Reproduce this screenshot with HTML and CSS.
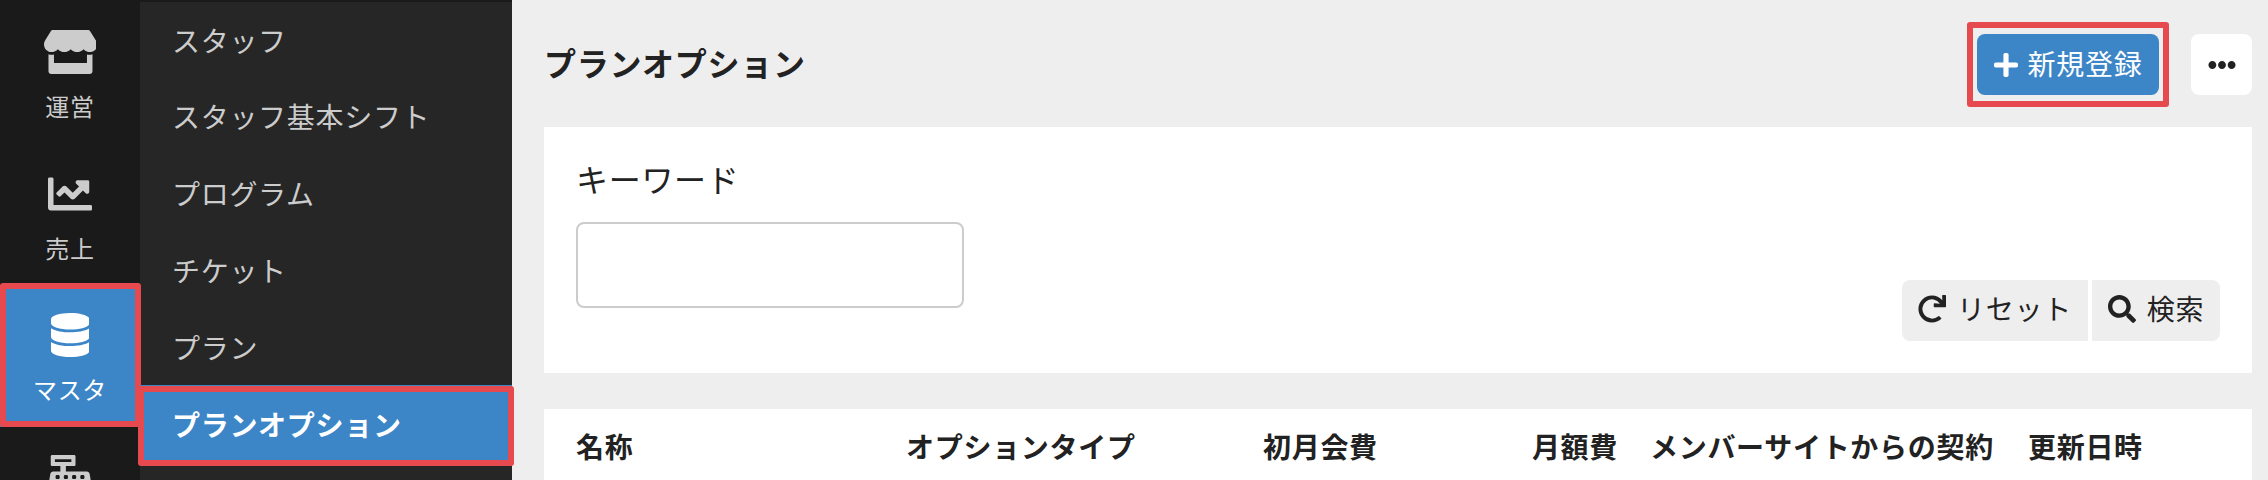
FILE: index.html
```html
<!DOCTYPE html>
<html lang="ja">

<head>
    <meta charset="UTF-8">
    <meta name="viewport" content="width=device-width, initial-scale=1.0">
    <title>プランオプション</title>
    <link rel="stylesheet" href="styles.css">
</head>

<body>

    <div class="rail">
        <a class="rail-item">
            <svg class="rail-icon" viewBox="0 0 616 512"><path d="M602 118.6L537.1 15C531.3 5.7 521 0 510 0H106C95 0 84.7 5.7 78.9 15L14 118.6c-33.9 54.1-3.9 129.3 59.4 137.9 4.6.6 9.2.9 13.7.9 29.9 0 56.4-13.1 74.6-33.4 18.2 20.3 44.8 33.4 74.6 33.4 29.9 0 56.4-13.1 74.6-33.4 18.2 20.3 44.8 33.4 74.6 33.4 30 0 56.4-13.1 74.6-33.4 18.3 20.3 44.8 33.4 74.6 33.4 4.6 0 9.1-.3 13.7-.9 63.5-8.5 93.6-83.7 59.6-137.9zM529.5 288c-10 0-19.9-1.5-29.5-3.8V384H116v-99.8c-9.6 2.2-19.5 3.8-29.5 3.8-6 0-12.1-.4-18-1.2-5.6-.8-11.1-2.1-16.4-3.6V480c0 17.7 14.3 32 32 32h448c17.7 0 32-14.3 32-32V283.2c-5.4 1.6-10.8 2.9-16.4 3.6-6.1.8-12.1 1.2-18.2 1.2z"/></svg>
            <span class="rail-label">運営</span>
        </a>
        <a class="rail-item">
            <svg class="rail-icon" viewBox="0 0 512 512"><path d="M496 384H64V80c0-8.84-7.16-16-16-16H16C7.16 64 0 71.16 0 80v336c0 17.67 14.33 32 32 32h464c8.84 0 16-7.16 16-16v-32c0-8.84-7.16-16-16-16zM464 96H345.94c-21.38 0-32.09 25.85-16.97 40.97l32.4 32.4L288 242.75l-73.37-73.37c-12.5-12.5-32.76-12.5-45.25 0l-68.69 68.69c-6.25 6.25-6.25 16.38 0 22.63l22.62 22.62c6.25 6.25 16.38 6.25 22.63 0L192 237.25l73.37 73.37c12.5 12.5 32.76 12.5 45.25 0l96-96 32.4 32.4c15.12 15.12 40.97 4.41 40.97-16.97V112c.01-8.84-7.15-16-15.99-16z"/></svg>
            <span class="rail-label">売上</span>
        </a>
        <a class="rail-item rail-active">
            <svg class="rail-icon" viewBox="0 0 448 512"><path d="M448 73.143v45.714C448 159.143 347.667 192 224 192S0 159.143 0 118.857V73.143C0 32.857 100.333 0 224 0s224 32.857 224 73.143zM448 176v102.857C448 319.143 347.667 352 224 352S0 319.143 0 278.857V176c48.125 33.143 136.208 48.572 224 48.572S399.874 209.143 448 176zm0 160v102.857C448 479.143 347.667 512 224 512S0 479.143 0 438.857V336c48.125 33.143 136.208 48.572 224 48.572S399.874 369.143 448 336z"/></svg>
            <span class="rail-label">マスタ</span>
        </a>
        <a class="rail-item rail-last">
            <svg class="rail-icon" viewBox="0 0 512 512"><path d="M511.1 378.8l-26.7-160c-2.6-15.4-15.9-26.7-31.6-26.7H208v-64h96c8.8 0 16-7.2 16-16V16c0-8.8-7.2-16-16-16H48c-8.8 0-16 7.2-16 16v96c0 8.8 7.2 16 16 16h96v64H59.1c-15.6 0-29 11.3-31.6 26.7L.8 378.7c-.5 2.6-.8 5.3-.8 7.9V480c0 17.7 14.3 32 32 32h448c17.7 0 32-14.3 32-32v-93.3c0-2.6-.2-5.3-.9-7.9zM280 248c0-8.8 7.2-16 16-16h16c8.8 0 16 7.2 16 16v16c0 8.8-7.2 16-16 16h-16c-8.8 0-16-7.2-16-16v-16zm-32 64h16c8.8 0 16 7.2 16 16v16c0 8.8-7.2 16-16 16h-16c-8.8 0-16-7.2-16-16v-16c0-8.8 7.2-16 16-16zm-32-80c8.8 0 16 7.2 16 16v16c0 8.8-7.2 16-16 16h-16c-8.8 0-16-7.2-16-16v-16c0-8.8 7.2-16 16-16h16zM80 80V48h192v32H80zm40 200h-16c-8.8 0-16-7.2-16-16v-16c0-8.8 7.2-16 16-16h16c8.8 0 16 7.2 16 16v16c0 8.8-7.2 16-16 16zm16 64v-16c0-8.8 7.2-16 16-16h16c8.8 0 16 7.2 16 16v16c0 8.8-7.2 16-16 16h-16c-8.8 0-16-7.2-16-16zm216 112c0 4.4-3.6 8-8 8H168c-4.4 0-8-3.6-8-8v-16c0-4.4 3.6-8 8-8h176c4.4 0 8 3.6 8 8v16zm24-112c0 8.8-7.2 16-16 16h-16c-8.8 0-16-7.2-16-16v-16c0-8.8 7.2-16 16-16h16c8.8 0 16 7.2 16 16v16zm48-80c0 8.8-7.2 16-16 16h-16c-8.8 0-16-7.2-16-16v-16c0-8.8 7.2-16 16-16h16c8.8 0 16 7.2 16 16v16z"/></svg>
        </a>
    </div>

    <div class="sub">
        <a class="sub-item">スタッフ</a>
        <a class="sub-item">スタッフ基本シフト</a>
        <a class="sub-item">プログラム</a>
        <a class="sub-item">チケット</a>
        <a class="sub-item">プラン</a>
        <a class="sub-item sub-active">プランオプション</a>
    </div>

    <div class="main">
        <div class="head">
            <h1 class="title">プランオプション</h1>
            <button class="but but-new">
                <svg class="icon-plus" viewBox="0 0 448 512"><path d="M416 208H272V64c0-17.67-14.33-32-32-32h-32c-17.67 0-32 14.33-32 32v144H32c-17.67 0-32 14.33-32 32v32c0 17.67 14.33 32 32 32h144v144c0 17.67 14.33 32 32 32h32c17.67 0 32-14.33 32-32V304h144c17.67 0 32-14.33 32-32v-32c0-17.67-14.33-32-32-32z"/></svg>
                <span class="but-text">新規登録</span>
            </button>
            <button class="but but-more">
                <svg class="icon" viewBox="0 0 512 512"><path d="M328 256c0 39.8-32.2 72-72 72s-72-32.2-72-72 32.2-72 72-72 72 32.2 72 72zm104-72c-39.8 0-72 32.2-72 72s32.2 72 72 72 72-32.2 72-72-32.2-72-72-72zm-352 0c-39.8 0-72 32.2-72 72s32.2 72 72 72 72-32.2 72-72-32.2-72-72-72z"/></svg>
            </button>
        </div>

        <div class="search">
            <div class="field">
                <label class="field-name">キーワード</label>
                <input class="field-input" type="text">
            </div>
            <div class="search-buttons">
                <button class="but but-reset">
                    <svg class="icon" viewBox="0 0 512 512"><path d="M500.33 0h-47.41a12 12 0 0 0-12 12.57l4 82.76A247.42 247.42 0 0 0 256 8C119.34 8 7.9 119.53 8 256.19 8.1 393.07 119.1 504 256 504a247.1 247.1 0 0 0 166.18-63.91 12 12 0 0 0 .48-17.43l-34-34a12 12 0 0 0-16.38-.55A176 176 0 1 1 402.1 157.8l-101.53-4.87a12 12 0 0 0-12.57 12v47.41a12 12 0 0 0 12 12h200.33a12 12 0 0 0 12-12V12a12 12 0 0 0-12-12z"/></svg>
                    <span class="but-text">リセット</span>
                </button>
                <button class="but but-search">
                    <svg class="icon" viewBox="0 0 512 512"><path d="M505 442.7L405.3 343c-4.5-4.5-10.6-7-17-7H372c27.6-35.3 44-79.7 44-128C416 93.1 322.9 0 208 0S0 93.1 0 208s93.1 208 208 208c48.3 0 92.7-16.4 128-44v16.3c0 6.4 2.5 12.5 7 17l99.7 99.7c9.4 9.4 24.6 9.4 33.9 0l28.3-28.3c9.4-9.4 9.4-24.6.1-34zM208 336c-70.7 0-128-57.2-128-128 0-70.7 57.2-128 128-128 70.7 0 128 57.2 128 128 0 70.7-57.2 128-128 128z"/></svg>
                    <span class="but-text">検索</span>
                </button>
            </div>
        </div>

        <div class="list">
            <table class="list-table">
                <colgroup>
                    <col class="col-name">
                    <col class="col-type">
                    <col class="col-first">
                    <col class="col-month">
                    <col class="col-site">
                    <col class="col-date">
                </colgroup>
                <tr>
                    <th>名称</th>
                    <th>オプションタイプ</th>
                    <th>初月会費</th>
                    <th class="num">月額費</th>
                    <th>メンバーサイトからの契約</th>
                    <th>更新日時</th>
                </tr>
            </table>
        </div>
    </div>

</body>

</html>
```

FILE: styles.css
```css
* {
    box-sizing: border-box;
}

html,
body {
    height: 100%;
}

body {
    margin: 0;
    display: flex;
    overflow: hidden;
    background-color: #eeeeee;
    color: #222222;
    font-family: "Noto Sans CJK JP", "Noto Sans", sans-serif;
    letter-spacing: 0.7px;
}

/* left icon column */
.rail {
    width: 140px;
    flex: none;
    padding-top: 2px;
    background-color: #1a1a1a;
}

.rail-item {
    height: 141.5px;
    padding-top: 28px;
    display: flex;
    flex-direction: column;
    align-items: center;
    color: #cccccc;
    position: relative;
}

.rail-last {
    height: 53.5px;
    overflow: hidden;
}

.rail-icon {
    height: 44px;
    flex: none;
    display: block;
    fill: currentColor;
}

.rail-label {
    margin-top: 16px;
    font-size: 24px;
    line-height: 32px;
}

.rail-active {
    background-color: #3c86c7;
    color: white;
}

.rail-active::after {
    content: "";
    position: absolute;
    top: -2px;
    right: -1px;
    bottom: 0;
    left: 0;
    border: 6px solid #e64a4f;
    border-radius: 3px;
}

/* second column */
.sub {
    width: 372px;
    flex: none;
    padding-top: 2px;
    background-color: #262626;
    border-top: 2px solid #1a1a1a;
    background-clip: padding-box;
}

.sub-item {
    height: 77px;
    padding-left: 32px;
    display: flex;
    align-items: center;
    font-size: 28px;
    color: #cccccc;
    position: relative;
}

.sub-item:first-child {
    height: 75px;
    margin-top: -2px;
}

.sub-active {
    background-color: #3c86c7;
    color: white;
    font-weight: bold;
}

.sub-active::after {
    content: "";
    position: absolute;
    top: 1px;
    right: -2px;
    bottom: -4px;
    left: -2px;
    border: 6px solid #e64a4f;
    border-radius: 3px;
}

/* content */
.main {
    flex: 1;
    padding: 34px 16px 0 32px;
}

.head {
    display: flex;
    align-items: center;
    margin-bottom: 32px;
}

.title {
    flex: 1;
    margin: 0;
    padding-bottom: 4px;
    font-size: 32px;
    line-height: 57px;
    font-weight: bold;
}

.but {
    height: 61px;
    padding: 0;
    border: none;
    border-radius: 8px;
    display: flex;
    align-items: center;
    justify-content: center;
    font-family: inherit;
    font-size: 28px;
    letter-spacing: 0.7px;
    color: #222222;
}

.but-text {
    margin-top: -3px;
}

.icon {
    width: 28px;
    height: 28px;
    fill: currentColor;
}

.icon-plus {
    width: 24px;
    height: 28px;
    fill: currentColor;
}

.but-new {
    width: 182px;
    gap: 10px;
    margin-right: 32px;
    background-color: #3c86c7;
    color: white;
    position: relative;
}

.but-new::after {
    content: "";
    position: absolute;
    top: -12px;
    right: -10px;
    bottom: -12px;
    left: -10px;
    border: 6px solid #e64a4f;
    border-radius: 3px;
}

.but-more {
    width: 61px;
    background-color: white;
}

.search {
    height: 246px;
    margin-bottom: 36px;
    padding: 32px;
    display: flex;
    justify-content: space-between;
    align-items: flex-end;
    background-color: white;
}

.field {
    align-self: flex-start;
}

.field-name {
    display: block;
    margin-bottom: 20px;
    margin-top: -5px;
    font-size: 32px;
    line-height: 48px;
}

.field-input {
    display: block;
    width: 388px;
    height: 86px;
    border: 2px solid #cccccc;
    border-radius: 8px;
    background-color: white;
}

.search-buttons {
    display: flex;
    gap: 4px;
}

.but-reset,
.but-search {
    gap: 11px;
    padding-bottom: 3px;
    background-color: #eeeeee;
}

.but-reset {
    width: 186px;
    border-radius: 8px 0 0 8px;
}

.but-search {
    width: 128px;
    border-radius: 0 8px 8px 0;
}

.list {
    height: 71px;
    padding: 0 16px;
    background-color: white;
}

.list-table {
    width: 1660px;
    table-layout: fixed;
    border-collapse: collapse;
}

.col-name {
    width: 330px;
}

.col-type {
    width: 357px;
}

.col-first {
    width: 144px;
}

.col-month {
    width: 243px;
}

.col-site {
    width: 378px;
}

.list-table th {
    padding: 17px 16px 14px;
    font-size: 28px;
    line-height: 40px;
    font-weight: bold;
    text-align: left;
    white-space: nowrap;
}

.list-table .num {
    text-align: right;
}
```
